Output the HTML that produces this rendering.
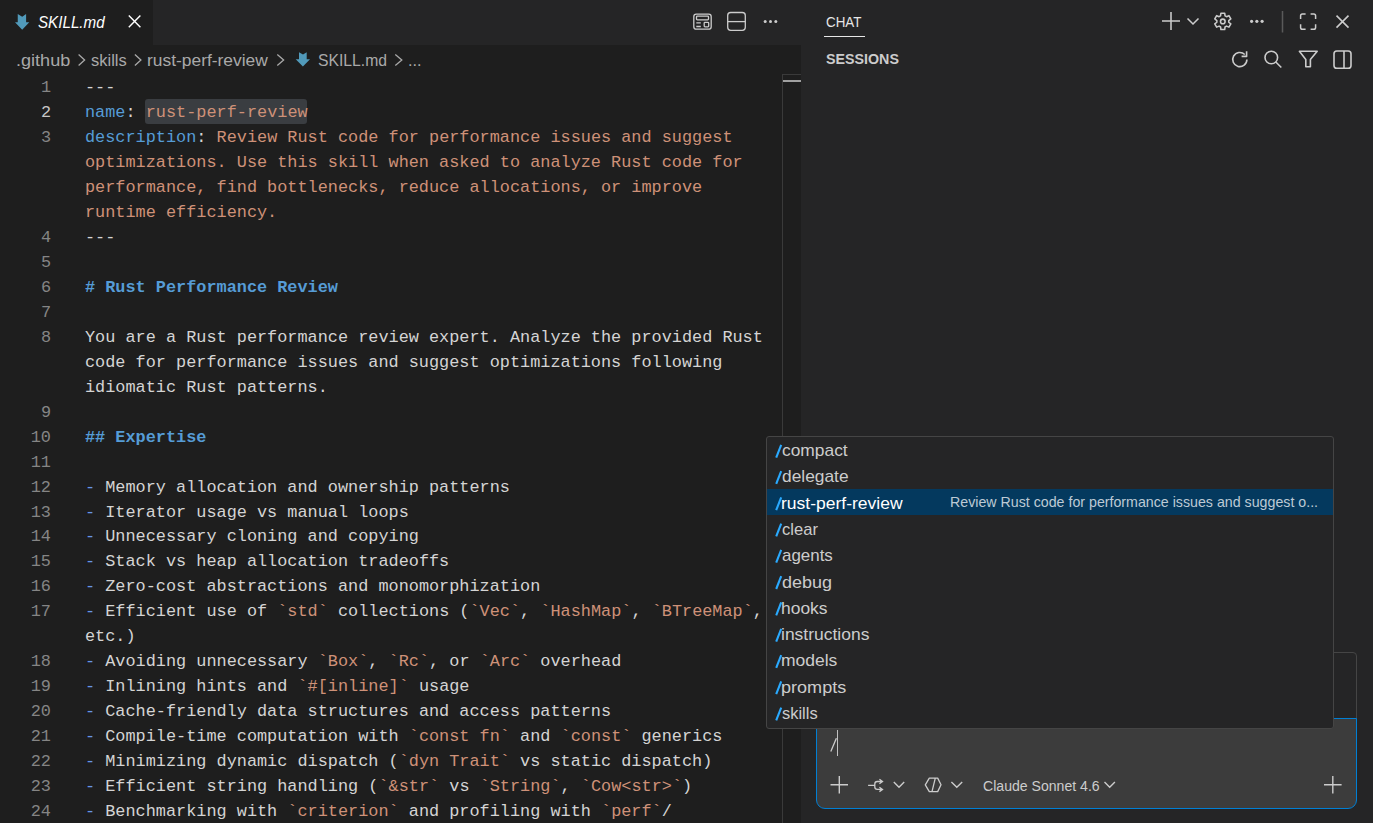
<!DOCTYPE html>
<html><head><meta charset="utf-8">
<style>
*{margin:0;padding:0;box-sizing:border-box}
html,body{width:1373px;height:823px;overflow:hidden;background:#252526;font-family:"Liberation Sans",sans-serif;color:#cccccc;position:relative}
.abs{position:absolute}
.t{position:absolute;white-space:nowrap;line-height:1;transform-origin:0 0}
svg{position:absolute;overflow:visible}
#code{position:absolute;left:0;top:74px;width:782px;height:749px;font-family:"Liberation Mono",monospace;font-size:16.87px;color:#d4d4d4}
.ln{position:absolute;left:0;width:51px;text-align:right;color:#858585;height:25px;line-height:25px}
.act{color:#c6c6c6}
.cl{position:absolute;left:85px;height:25px;line-height:25px;white-space:pre}
.k{color:#569cd6}.s{color:#ce9178}.h{color:#569cd6;font-weight:bold}.m{color:#6796e6}
.hl{color:#ce9178}
</style></head><body>
<!-- editor -->
<div class="abs" style="left:0;top:0;width:801px;height:823px;background:#1e1e1e"></div>
<div class="abs" style="left:0;top:0;width:801px;height:45px;background:#252526"></div>
<div class="abs" style="left:0;top:0;width:153px;height:45px;background:#1e1e1e"></div>
<svg style="left:0;top:0" width="1" height="1"><path d="M17.75 14.1 L22.2 16.7 L26.1 14.1 L26.1 22.2 L29.3 22.2 L22.2 29.8 L15 22.2 L17.75 22.2 Z" fill="#519aba"/></svg>
<div class="t" style="left:38.13px;top:15.16px;font-size:16px;color:#ffffff;font-style:italic;transform:scaleX(0.9487);">SKILL.md</div>
<svg style="left:0;top:0" width="1" height="1"><path d="M128.8 15.6 L140.4 27.2 M140.4 15.6 L128.8 27.2" stroke="#ffffff" stroke-width="1.45"/></svg>
<svg style="left:0;top:0" width="1" height="1" fill="none" stroke="#cccccc" stroke-width="1.3">
  <rect x="693.8" y="14.2" width="17.4" height="15" rx="2.5"/>
  <rect x="696.5" y="16.2" width="12" height="3.6" rx="0.8"/>
  <path d="M696.3 22.8 H700.8 M696.3 26.5 H700.8"/>
  <rect x="704.2" y="22.3" width="4.5" height="4.5" rx="0.8"/>
  <rect x="727.7" y="12.5" width="17.6" height="17.8" rx="3"/>
  <path d="M727.7 21.6 H745.3"/>
</svg>
<svg style="left:0;top:0" width="1" height="1" fill="#cccccc"><circle cx="765.2" cy="21.4" r="1.5"/><circle cx="770.5" cy="21.4" r="1.5"/><circle cx="775.8" cy="21.4" r="1.5"/></svg>
<!-- breadcrumbs -->
<div class="t" style="left:16.30px;top:52.01px;font-size:17px;color:#a9a9a9;transform:scaleX(1.0634);">.github</div>
<div class="t" style="left:91.12px;top:52.01px;font-size:17px;color:#a9a9a9;transform:scaleX(0.9692);">skills</div>
<div class="t" style="left:147.37px;top:52.01px;font-size:17px;color:#a9a9a9;transform:scaleX(1.0231);">rust-perf-review</div>
<div class="t" style="left:318.46px;top:52.01px;font-size:17px;color:#a9a9a9;transform:scaleX(0.9245);">SKILL.md</div>
<div class="t" style="left:407.57px;top:52.01px;font-size:17px;color:#a9a9a9;transform:scaleX(0.9550);">...</div>
<svg style="left:0;top:0" width="1" height="1" fill="none" stroke="#a9a9a9" stroke-width="1.3">
  <path d="M78.6 54.6 L84.6 60 L78.6 65.4 M134.9 54.6 L140.9 60 L134.9 65.4 M277.3 54.6 L283.6 60 L277.3 65.4 M395.3 54.6 L401.8 60 L395.3 65.4"/>
</svg>
<svg style="left:0;top:0" width="1" height="1"><path d="M299 52.2 L303 54.6 L306.7 52.2 L306.7 59.3 L310 59.3 L302.9 66.4 L295.7 59.3 L299 59.3 Z" fill="#519aba"/></svg>
<div class="abs" style="left:145px;top:99px;width:162px;height:25px;background:#3a3d41;border-radius:3px"></div>
<div id="code">
<div class="ln" style="top:1px">1</div>
<div class="cl" style="top:1px">---</div>
<div class="ln act" style="top:26px">2</div>
<div class="cl" style="top:26px"><span class="k">name</span>: <span class="hl">rust-perf-review</span></div>
<div class="ln" style="top:51px">3</div>
<div class="cl" style="top:51px"><span class="k">description</span>: <span class="s">Review Rust code for performance issues and suggest</span></div>
<div class="cl" style="top:76px"><span class="s">optimizations. Use this skill when asked to analyze Rust code for</span></div>
<div class="cl" style="top:101px"><span class="s">performance, find bottlenecks, reduce allocations, or improve</span></div>
<div class="cl" style="top:126px"><span class="s">runtime efficiency.</span></div>
<div class="ln" style="top:151px">4</div>
<div class="cl" style="top:151px">---</div>
<div class="ln" style="top:176px">5</div>
<div class="ln" style="top:201px">6</div>
<div class="cl" style="top:201px"><span class="h"># Rust Performance Review</span></div>
<div class="ln" style="top:226px">7</div>
<div class="ln" style="top:251px">8</div>
<div class="cl" style="top:251px">You are a Rust performance review expert. Analyze the provided Rust</div>
<div class="cl" style="top:276px">code for performance issues and suggest optimizations following</div>
<div class="cl" style="top:301px">idiomatic Rust patterns.</div>
<div class="ln" style="top:326px">9</div>
<div class="ln" style="top:351px">10</div>
<div class="cl" style="top:351px"><span class="h">## Expertise</span></div>
<div class="ln" style="top:376px">11</div>
<div class="ln" style="top:401px">12</div>
<div class="cl" style="top:401px"><span class="m">-</span> Memory allocation and ownership patterns</div>
<div class="ln" style="top:426px">13</div>
<div class="cl" style="top:426px"><span class="m">-</span> Iterator usage vs manual loops</div>
<div class="ln" style="top:450px">14</div>
<div class="cl" style="top:450px"><span class="m">-</span> Unnecessary cloning and copying</div>
<div class="ln" style="top:475px">15</div>
<div class="cl" style="top:475px"><span class="m">-</span> Stack vs heap allocation tradeoffs</div>
<div class="ln" style="top:500px">16</div>
<div class="cl" style="top:500px"><span class="m">-</span> Zero-cost abstractions and monomorphization</div>
<div class="ln" style="top:525px">17</div>
<div class="cl" style="top:525px"><span class="m">-</span> Efficient use of <span class="s">`std`</span> collections (<span class="s">`Vec`</span>, <span class="s">`HashMap`</span>, <span class="s">`BTreeMap`</span>,</div>
<div class="cl" style="top:550px">etc.)</div>
<div class="ln" style="top:575px">18</div>
<div class="cl" style="top:575px"><span class="m">-</span> Avoiding unnecessary <span class="s">`Box`</span>, <span class="s">`Rc`</span>, or <span class="s">`Arc`</span> overhead</div>
<div class="ln" style="top:600px">19</div>
<div class="cl" style="top:600px"><span class="m">-</span> Inlining hints and <span class="s">`#[inline]`</span> usage</div>
<div class="ln" style="top:625px">20</div>
<div class="cl" style="top:625px"><span class="m">-</span> Cache-friendly data structures and access patterns</div>
<div class="ln" style="top:650px">21</div>
<div class="cl" style="top:650px"><span class="m">-</span> Compile-time computation with <span class="s">`const fn`</span> and <span class="s">`const`</span> generics</div>
<div class="ln" style="top:675px">22</div>
<div class="cl" style="top:675px"><span class="m">-</span> Minimizing dynamic dispatch (<span class="s">`dyn Trait`</span> vs static dispatch)</div>
<div class="ln" style="top:700px">23</div>
<div class="cl" style="top:700px"><span class="m">-</span> Efficient string handling (<span class="s">`&amp;str`</span> vs <span class="s">`String`</span>, <span class="s">`Cow&lt;str&gt;`</span>)</div>
<div class="ln" style="top:725px">24</div>
<div class="cl" style="top:725px"><span class="m">-</span> Benchmarking with <span class="s">`criterion`</span> and profiling with <span class="s">`perf`</span>/</div>
</div>
<div class="abs" style="left:782px;top:74px;width:19px;height:749px;border-left:1px solid #3a3a3a;border-top:1px solid #3a3a3a"></div>
<div class="abs" style="left:783px;top:80px;width:18px;height:2px;background:#a0a0a0"></div>
<!-- chat -->
<div class="t" style="left:826.24px;top:15.10px;font-size:14.3px;color:#e7e7e7;transform:scaleX(0.9375);">CHAT</div>
<div class="abs" style="left:824px;top:36px;width:41px;height:1px;background:#e7e7e7"></div>
<div class="t" style="left:826.40px;top:52.40px;font-size:14.3px;color:#cccccc;font-weight:bold;transform:scaleX(0.9972);">SESSIONS</div>
<svg style="left:0;top:0" width="1" height="1" fill="none" stroke="#cccccc" stroke-width="1.55">
  <path d="M1171 12 V30 M1162 21 H1180"/>
  <path d="M1187.5 18.5 L1193 24 L1198.5 18.5"/>
  <circle cx="1222.8" cy="21.4" r="2.3"/>
  <path d="M1225.05 15.84 L1224.69 13.22 L1220.91 13.22 L1220.55 15.84 L1219.11 16.67 L1216.66 15.67 L1214.77 18.94 L1216.86 20.56 L1216.86 22.24 L1214.77 23.86 L1216.66 27.13 L1219.11 26.13 L1220.55 26.96 L1220.91 29.58 L1224.69 29.58 L1225.05 26.96 L1226.49 26.13 L1228.94 27.13 L1230.83 23.86 L1228.74 22.24 L1228.74 20.56 L1230.83 18.94 L1228.94 15.67 L1226.49 16.67 Z" stroke-linejoin="round"/>
  <path d="M1282.5 11 V32.5" stroke="#5a5a5a"/>
  <path d="M1300.6 19 V15.7 Q1300.6 13.9 1302.4 13.9 H1305.6 M1310.6 13.9 H1313.8 Q1315.6 13.9 1315.6 15.7 V19 M1315.6 24.2 V27.5 Q1315.6 29.3 1313.8 29.3 H1310.6 M1305.6 29.3 H1302.4 Q1300.6 29.3 1300.6 27.5 V24.2" stroke-width="1.5"/>
  <path d="M1336.5 15.6 L1348.5 27.6 M1348.5 15.6 L1336.5 27.6"/>
</svg>
<svg style="left:0;top:0" width="1" height="1" fill="#cccccc"><circle cx="1251.6" cy="21.3" r="1.6"/><circle cx="1256.85" cy="21.3" r="1.6"/><circle cx="1262.1" cy="21.3" r="1.6"/></svg>
<svg style="left:0;top:0" width="1" height="1" fill="none" stroke="#cccccc" stroke-width="1.6" stroke-linejoin="round">
  <path d="M1246.9 59.5 A7.1 7.1 0 1 1 1244.8 54.5"/><path d="M1246.6 51.3 V56.4 H1241.6"/>
  <circle cx="1271.3" cy="57.5" r="6.3"/><path d="M1275.8 62 L1281.3 67.5"/>
  <path d="M1299.4 51.3 H1317.2 L1310.4 59.6 V66.8 H1305.8 V59.6 Z" stroke-linejoin="round"/>
  <rect x="1334" y="51" width="17" height="17.2" rx="2.8"/><path d="M1344 51 V68.2"/>
</svg>
<!-- context box + input -->
<div class="abs" style="left:816px;top:652px;width:541px;height:80px;border:1px solid #454545;border-radius:4px 4px 0 0"></div>
<div class="abs" style="left:816px;top:718px;width:541px;height:91px;background:#3c3c3c;border:1px solid #007fd4;border-radius:0 0 9px 9px"></div>
<svg style="left:0;top:0" width="1" height="1"><path d="M830.8 751.5 L836.4 738.2" stroke="#cccccc" stroke-width="1.3"/></svg>
<div class="abs" style="left:837px;top:730px;width:1.3px;height:26px;background:#c0c0c0"></div>
<svg style="left:0;top:0" width="1" height="1" fill="none" stroke="#cccccc" stroke-width="1.4">
  <path d="M839.3 776 V793.5 M830.5 784.7 H848"/>
  <path d="M868.1 785.3 H874.8 M882.5 781.5 H877.3 Q874.8 781.5 874.8 784 V787 Q874.8 789.4 877.3 789.4 H882.5 M879.4 779.3 L882.5 781.5 L879.4 783.7 M879.4 787.2 L882.5 789.4 L879.4 791.6" stroke-width="1.3"/>
  <path d="M893.8 782 L899 787.2 L904.2 782"/>
  <path d="M929.3 778.1 H937.7 L941 784.8 L937.7 791.6 H929.3 L925.3 784.8 Z M935.3 778.1 L932 791.6" stroke-width="1.3" stroke-linejoin="round"/>
  <path d="M951.4 782 L956.8 787.2 L962.2 782"/>
  <path d="M1104.5 782 L1109.7 787.2 L1114.9 782"/>
  <path d="M1332.8 776 V793.5 M1324 784.7 H1341.6"/>
</svg>
<div class="t" style="left:982.52px;top:778.57px;font-size:14.45px;color:#cccccc;transform:scaleX(0.9754);">Claude Sonnet 4.6</div>
<!-- suggest widget -->
<div class="abs" style="left:766px;top:435.5px;width:568px;height:293.5px;background:#252526;border:1px solid #454545;border-radius:3px"></div>
<svg class="abs" style="left:0;top:0" width="1373" height="823"><path d="M776.2 457.60 L781.2 444.80" stroke="#2aaaff" stroke-width="2.1"/></svg>
<div class="t" style="left:781.78px;top:442.21px;font-size:17px;color:#cccccc;transform:scaleX(1.0221);">compact</div>
<svg class="abs" style="left:0;top:0" width="1373" height="823"><path d="M776.2 483.88 L781.2 471.08" stroke="#2aaaff" stroke-width="2.1"/></svg>
<div class="t" style="left:781.79px;top:468.49px;font-size:17px;color:#cccccc;transform:scaleX(1.0204);">delegate</div>
<div class="abs" style="left:767px;top:489.06px;width:566px;height:26.28px;background:#04395e"></div>
<div class="t" style="left:950.02px;top:495.43px;font-size:14.5px;color:#bdcad5;transform:scaleX(0.9799);">Review Rust code for performance issues and suggest o...</div>
<svg class="abs" style="left:0;top:0" width="1373" height="823"><path d="M776.2 510.16 L781.2 497.36" stroke="#2aaaff" stroke-width="2.1"/></svg>
<div class="t" style="left:781.37px;top:494.77px;font-size:17px;color:#ffffff;transform:scaleX(1.0299);">rust-perf-review</div>
<svg class="abs" style="left:0;top:0" width="1373" height="823"><path d="M776.2 536.44 L781.2 523.64" stroke="#2aaaff" stroke-width="2.1"/></svg>
<div class="t" style="left:781.82px;top:521.05px;font-size:17px;color:#cccccc;transform:scaleX(0.9749);">clear</div>
<svg class="abs" style="left:0;top:0" width="1373" height="823"><path d="M776.2 562.72 L781.2 549.92" stroke="#2aaaff" stroke-width="2.1"/></svg>
<div class="t" style="left:781.80px;top:547.33px;font-size:17px;color:#cccccc;transform:scaleX(0.9960);">agents</div>
<svg class="abs" style="left:0;top:0" width="1373" height="823"><path d="M776.2 589.00 L781.2 576.20" stroke="#2aaaff" stroke-width="2.1"/></svg>
<div class="t" style="left:781.76px;top:573.61px;font-size:17px;color:#cccccc;transform:scaleX(1.0593);">debug</div>
<svg class="abs" style="left:0;top:0" width="1373" height="823"><path d="M776.2 615.28 L781.2 602.48" stroke="#2aaaff" stroke-width="2.1"/></svg>
<div class="t" style="left:781.27px;top:599.89px;font-size:17px;color:#cccccc;transform:scaleX(1.0252);">hooks</div>
<svg class="abs" style="left:0;top:0" width="1373" height="823"><path d="M776.2 641.56 L781.2 628.76" stroke="#2aaaff" stroke-width="2.1"/></svg>
<div class="t" style="left:781.37px;top:626.17px;font-size:17px;color:#cccccc;transform:scaleX(1.0285);">instructions</div>
<svg class="abs" style="left:0;top:0" width="1373" height="823"><path d="M776.2 667.84 L781.2 655.04" stroke="#2aaaff" stroke-width="2.1"/></svg>
<div class="t" style="left:781.37px;top:652.45px;font-size:17px;color:#cccccc;transform:scaleX(1.0282);">models</div>
<svg class="abs" style="left:0;top:0" width="1373" height="823"><path d="M776.2 694.12 L781.2 681.32" stroke="#2aaaff" stroke-width="2.1"/></svg>
<div class="t" style="left:781.33px;top:678.73px;font-size:17px;color:#cccccc;transform:scaleX(1.0620);">prompts</div>
<svg class="abs" style="left:0;top:0" width="1373" height="823"><path d="M776.2 720.40 L781.2 707.60" stroke="#2aaaff" stroke-width="2.1"/></svg>
<div class="t" style="left:782.02px;top:705.01px;font-size:17px;color:#cccccc;transform:scaleX(0.9664);">skills</div>
</body></html>
